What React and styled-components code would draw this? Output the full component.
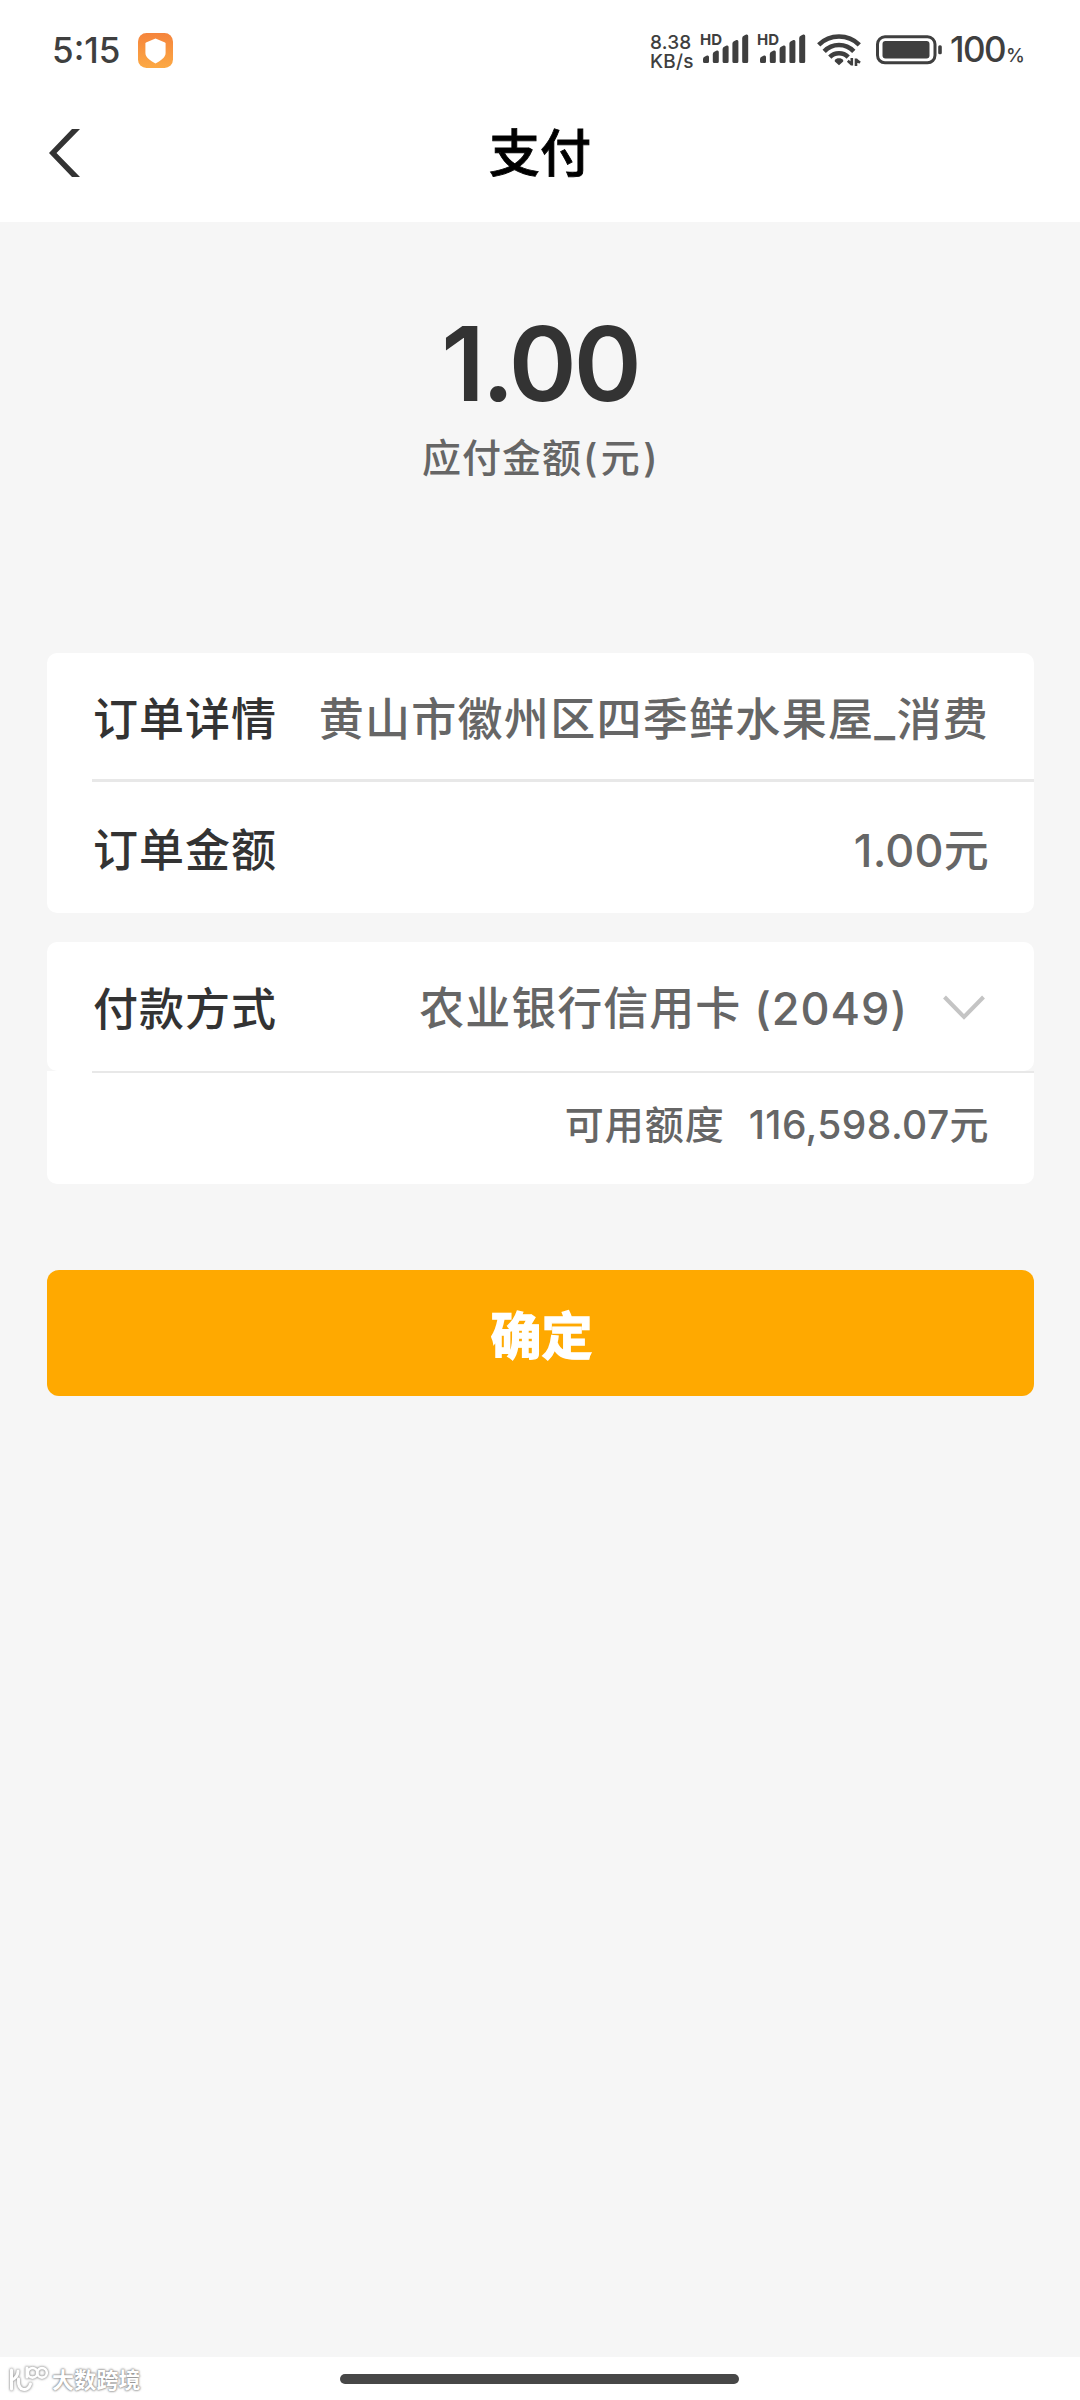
import React from "react";
import styled, { createGlobalStyle } from "styled-components";

const GlobalStyle = createGlobalStyle`
    * {
        box-sizing: border-box;
    }

    body {
        margin: 0;
        background: #fff;
        font-family: Inter, "Noto Sans CJK SC", sans-serif;
        font-weight: 500;
    }

    svg {
        display: block;
        flex-shrink: 0;
    }
`;

const Page = styled.div`
    width: 1080px;
    height: 2400px;
    display: flex;
    flex-direction: column;
    background: #f6f6f6;
    overflow: hidden;
    white-space: nowrap;
`;

const StatusBar = styled.div`
    height: 100px;
    display: flex;
    align-items: center;
    justify-content: space-between;
    padding: 0 57px 0 52px;
    background: #fff;
    color: #3f3f3f;
`;

const StatusGroup = styled.div`
    display: flex;
    align-items: center;
`;

const Clock = styled.span`
    font-size: 35px;
    line-height: 40px;
    letter-spacing: 0;
    width: 86px;
`;

const Speed = styled.div`
    width: 50px;
    font-size: 19px;
    line-height: 19px;
    letter-spacing: 0.2px;
    padding-top: 4px;
`;

const Signal = styled.div`
    display: flex;
    width: 57px;
    height: 32px;
    align-items: flex-start;
    position: relative;

    &>svg {
        margin-left: 3px;
    }
`;

const HdTag = styled.span`
    position: absolute;
    left: 0;
    top: -2px;
    font-size: 15px;
    line-height: 16px;
    font-weight: 700;
`;

const Percent = styled.div`
    display: flex;
    align-items: baseline;
    width: 73px;
    margin-left: 8px;
    padding-top: 4px;
    font-size: 35px;
    line-height: 40px;
    letter-spacing: -1.6px;

    &>small {
        font-size: 19px;
        margin-left: 1px;
    }
`;

const NavBar = styled.header`
    height: 122px;
    display: grid;
    grid-template-columns: 120px 1fr 120px;
    align-items: center;
    padding-bottom: 16px;
    background: #fff;

    &>svg {
        margin-left: 48px;
    }
`;

const Title = styled.h1`
    margin: 0;
    padding-top: 2px;
    text-align: center;
    font-size: 51px;
    line-height: 60px;
    font-weight: 500;
    color: #000;
    -webkit-text-stroke: 0.8px #000;
`;

const Amount = styled.section`
    height: 431px;
    display: flex;
    flex-direction: column;
    align-items: center;
    padding-top: 82px;
`;

const AmountValue = styled.div`
    font-size: 103px;
    line-height: 120px;
    font-weight: 600;
    letter-spacing: -3px;
    color: #333;
`;

const AmountLabel = styled.div`
    margin-top: 6px;
    font-size: 39px;
    line-height: 56px;
    letter-spacing: 1px;
    color: #666;
`;

const Unit = styled.span`
    letter-spacing: 3.4px;
    margin: 0 -3px 0 1px;
`;

const Main = styled.main`
    flex: 1;
    padding: 0 46px 0 47px;
`;

const Card = styled.div`
    margin-bottom: ${props => props.gap}px;
`;

const Row = styled.div`
    display: flex;
    align-items: center;
    justify-content: ${props => props.end ? "flex-end" : "space-between"};
    height: ${props => props.height}px;
    padding: 0 45px ${props => props.end ? 14 : 0}px 46px;
    background: #fff;
    border-radius: ${props => props.corners};
    font-size: ${props => props.end ? 39 : 45}px;
    color: #666;
`;

const Divider = styled.div`
    height: ${props => props.thickness}px;
    background: linear-gradient(to right, #fff 45px, #e8e8e8 45px);
`;

const Label = styled.span`
    letter-spacing: 1px;
    color: #333;
`;

const Value = styled.span`
    letter-spacing: ${props => props.spacing || 0}px;
    margin-left: ${props => props.left || 0}px;
`;

const Picker = styled.div`
    display: flex;
    align-items: center;
    gap: 35px;
    margin: 0 4px 3px 0;

    &>svg {
        margin-top: 5px;
    }
`;

const Confirm = styled.button`
    width: 100%;
    height: 126px;
    display: block;
    border: 0;
    padding: 0 0 0 2px;
    border-radius: 12px;
    background: #ffa900;
    color: #fff;
    font-family: inherit;
    font-size: 51px;
    font-weight: 700;
    -webkit-text-stroke: 1.4px #fff;
`;

const HomeBar = styled.footer`
    height: 43px;
    display: grid;
    grid-template-columns: 340px 399px 1fr;
    align-items: center;
    background: #fff;
`;

const Pill = styled.div`
    height: 10px;
    margin-top: 1px;
    border-radius: 5px;
    background: #474747;
`;

const Watermark = styled.div`
    display: flex;
    align-items: center;
    padding: 2px 0 0 8px;
    gap: 3px;
    color: #fff;
    font-size: 22px;
    line-height: 28px;
    letter-spacing: 0.2px;
    font-weight: 700;
    text-shadow: 0 0 2px #888, 0 0 2px #999, 0 0 3px #aaa;

    &>svg {
        filter: drop-shadow(0 0 1px #999) drop-shadow(0 0 1px #bbb);
    }
`;

const bars = [
    { x: 0, top: 21 },
    { x: 9.8, top: 16 },
    { x: 19.6, top: 11 },
    { x: 29.4, top: 5.6 },
    { x: 39.2, top: 0 },
];

function SignalIcon() {
    return (
        <Signal>
            <HdTag>HD</HdTag>
            <svg width="46" height="30" viewBox="0 0 46 30" fill="#3f3f3f">
                {bars.map(({ x, top }) => (
                    <path key={x} d={`M${x} ${top + 4}Q${x} ${top + 2} ${x + 2} ${top + 1.5}L${x + 4} ${top + 0.5}Q${x + 6} ${top} ${x + 6} ${top + 2}V27.5Q${x + 6} 29 ${x + 4.5} 29H${x + 1.5}Q${x} 29 ${x} 27.5Z`} />
                ))}
            </svg>
        </Signal>
    );
}

function WifiIcon() {
    return (
        <svg width="46" height="34" viewBox="0 0 46 34" fill="none" stroke="#3f3f3f" strokeWidth="4.6">
            <path d="M1.7 11.8A29 29 0 0 1 42.3 11.8" />
            <path d="M7.2 18.3A20.5 20.5 0 0 1 36.8 18.3" />
            <path d="M12.8 24A13 13 0 0 1 31.2 24" />
            <path d="M22 25.2c2 0 3.2.7 4.2 1.7v1.6L22 32.3l-4.2-3.8v-1.6c1-1 2.2-1.7 4.2-1.7Z" fill="#3f3f3f" stroke="none" />
            <path d="M34.8 25v7.5M34.8 31.5l-4-3.7M39 33v-7.5M39 26.5l4 3.2" strokeWidth="2.6" />
        </svg>
    );
}

function BatteryIcon() {
    return (
        <svg width="66" height="30" viewBox="0 0 66 30" fill="#3f3f3f">
            <rect x="1.5" y="1.8" width="57.5" height="26" rx="7.5" fill="none" stroke="#3f3f3f" strokeWidth="3" />
            <rect x="6.5" y="6" width="47" height="17.6" rx="3" />
            <rect x="62.2" y="10.2" width="3.6" height="9" rx="1.5" />
        </svg>
    );
}

function ShieldIcon() {
    return (
        <svg width="35" height="35" viewBox="0 0 35 35">
            <defs>
                <linearGradient id="shield" x1="0" y1="0" x2="0" y2="1">
                    <stop offset="0" stopColor="#f5843c" />
                    <stop offset="1" stopColor="#fca944" />
                </linearGradient>
            </defs>
            <rect width="35" height="35" rx="8.5" fill="url(#shield)" />
            <path d="M17.5 5.500 27 9.500q.6.300.6 1V20c0 4.500-5.500 8-10.100 10.500C12.900 28 7.400 24.500 7.400 20V10.500q0-.7.6-1Z" fill="#fff" />
        </svg>
    );
}

function WatermarkLogo() {
    return (
        <svg width="41" height="28" viewBox="0 0 41 28" fill="none" stroke="#fff" strokeWidth="3" strokeLinecap="round">
            <path d="M3.500 4V23M4 14C8 12 10 9 10 5M10.500 13C9.500 26 20 26 22.500 18" />
            <path d="M19 2v9" />
            <circle cx="24.500" cy="6.800" r="4.800" strokeWidth="2.600" />
            <circle cx="34" cy="6.800" r="4.800" strokeWidth="2.600" />
        </svg>
    );
}

function App() {
    return (
        <Page>
            <GlobalStyle />
            <StatusBar>
                <StatusGroup>
                    <Clock>5:15</Clock>
                    <ShieldIcon />
                </StatusGroup>
                <StatusGroup>
                    <Speed>8.38<br />KB/s</Speed>
                    <SignalIcon />
                    <SignalIcon />
                    <Value left={3} />
                    <WifiIcon />
                    <Value left={13} />
                    <BatteryIcon />
                    <Percent>100<small>%</small></Percent>
                </StatusGroup>
            </StatusBar>
            <NavBar>
                <svg width="33" height="50" viewBox="0 0 33 50" fill="#333">
                    <path d="M24 1h8L8.500 25 32 49h-8L1 25Z" />
                </svg>
                <Title>支付</Title>
            </NavBar>
            <Amount>
                <AmountValue>1.00</AmountValue>
                <AmountLabel>应付金额<Unit>(元)</Unit></AmountLabel>
            </Amount>
            <Main>
                <Card gap={29}>
                    <Row height={126} corners="10px 10px 0 0">
                        <Label>订单详情</Label>
                        <Value spacing={1.3}>黄山市徽州区四季鲜水果屋_消费</Value>
                    </Row>
                    <Divider thickness={3} />
                    <Row height={131} corners="0 0 10px 10px">
                        <Label>订单金额</Label>
                        <Value spacing={0.2}>1.00元</Value>
                    </Row>
                </Card>
                <Card gap={86}>
                    <Row height={129} corners="10px">
                        <Label>付款方式</Label>
                        <Picker>
                            <Value spacing={1}>农业银行信用卡 (2049)</Value>
                            <svg width="42" height="26" viewBox="0 0 42 26" fill="none" stroke="#c4c4c4" strokeWidth="4">
                                <path d="M1.500 2 21 22 40.500 2" />
                            </svg>
                        </Picker>
                    </Row>
                    <Divider thickness={2} />
                    <Row end height={111} corners="0 0 10px 10px">
                        <Value spacing={1}>可用额度</Value>
                        <Value left={24} spacing={0.4}>116,598.07元</Value>
                    </Row>
                </Card>
                <Confirm>确定</Confirm>
            </Main>
            <HomeBar>
                <Watermark>
                    <WatermarkLogo />
                    大数跨境
                </Watermark>
                <Pill />
            </HomeBar>
        </Page>
    );
}

export default App;
